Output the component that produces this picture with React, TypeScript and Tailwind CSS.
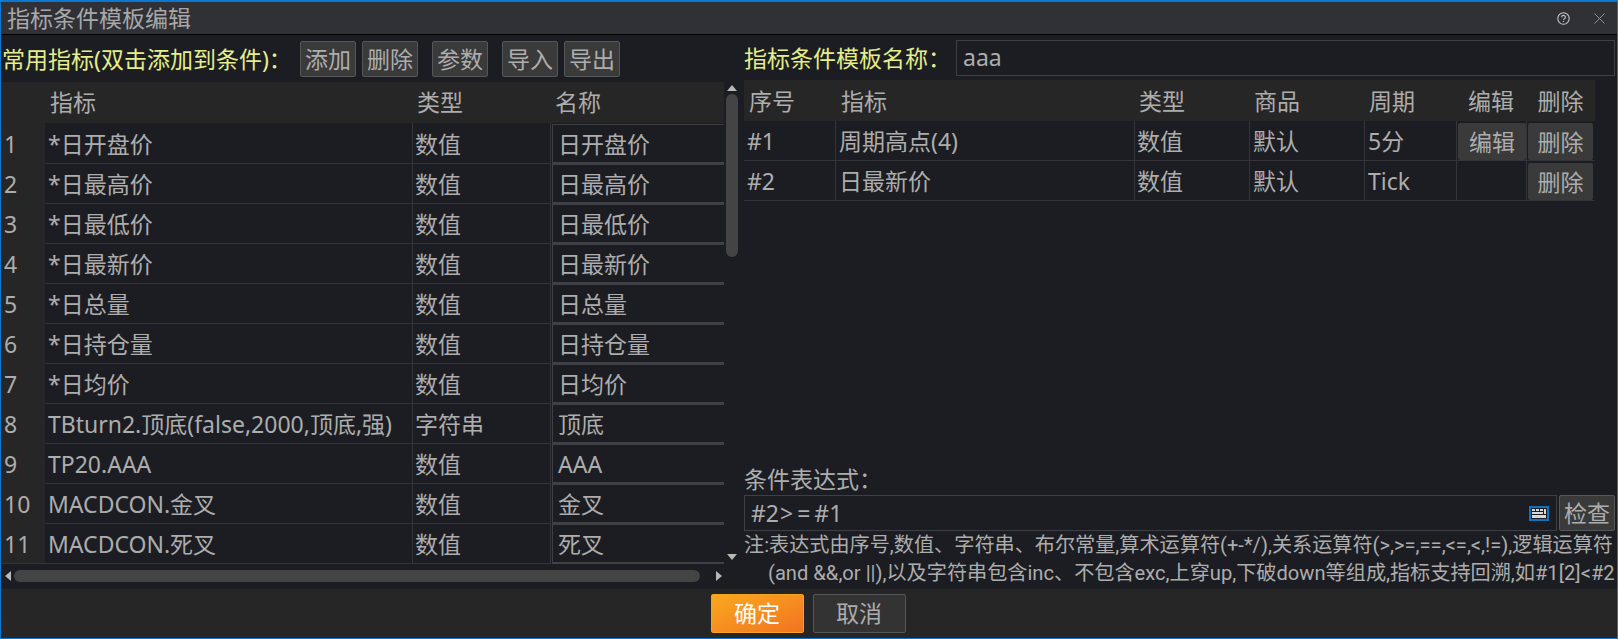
import React from "react";

const FONT = "[font-family:'Noto_Sans','Noto_Sans_CJK_SC',sans-serif]";

const leftRows = [
  { name: "*日开盘价", type: "数值", label: "日开盘价" },
  { name: "*日最高价", type: "数值", label: "日最高价" },
  { name: "*日最低价", type: "数值", label: "日最低价" },
  { name: "*日最新价", type: "数值", label: "日最新价" },
  { name: "*日总量", type: "数值", label: "日总量" },
  { name: "*日持仓量", type: "数值", label: "日持仓量" },
  { name: "*日均价", type: "数值", label: "日均价" },
  { name: "TBturn2.顶底(false,2000,顶底,强)", type: "字符串", label: "顶底" },
  { name: "TP20.AAA", type: "数值", label: "AAA" },
  { name: "MACDCON.金叉", type: "数值", label: "金叉" },
  { name: "MACDCON.死叉", type: "数值", label: "死叉" },
];

const rightRows = [
  { id: "#1", name: "周期高点(4)", type: "数值", item: "默认", period: "5分", editable: true },
  { id: "#2", name: "日最新价", type: "数值", item: "默认", period: "Tick", editable: false },
];

function ToolButton({ label, className = "" }: { label: string; className?: string }) {
  return (
    <button className={`h-9 w-14 shrink-0 rounded-[2px] border border-[#55565a] bg-[#3a3a3a] text-[#adadad] leading-none pt-0.5 ${className}`}>
      {label}
    </button>
  );
}

function RowButton({ label }: { label: string }) {
  return (
    <button className="h-[37px] mt-px w-full rounded-[2px] bg-[#3a3a3a] text-[#adadad] leading-none pt-0.5">
      {label}
    </button>
  );
}

function Arrow({ dir }: { dir: "up" | "down" | "left" | "right" }) {
  const points = {
    up: "0,6 5,0 10,6",
    down: "0,0 5,6 10,0",
    left: "6,0 0,5 6,10",
    right: "0,0 6,5 0,10",
  }[dir];
  const box = dir === "up" || dir === "down" ? "0 0 10 6" : "0 0 6 10";
  const size = dir === "up" || dir === "down" ? "w-2.5 h-1.5" : "w-1.5 h-2.5";
  return (
    <svg viewBox={box} className={size}>
      <polygon points={points} fill="#b8b8b8" />
    </svg>
  );
}

function KeyboardIcon() {
  return (
    <svg viewBox="0 0 20 15" className="w-5 h-[15px]">
      <rect x="0" y="0" width="20" height="15" fill="#1273b8" />
      <rect x="2" y="2" width="16" height="11" fill="#1c1d22" />
      <rect x="3" y="3" width="3" height="2" fill="#d8d8d8" />
      <rect x="7" y="3" width="3" height="2" fill="#d8d8d8" />
      <rect x="11" y="3" width="3" height="2" fill="#d8d8d8" />
      <rect x="15" y="3" width="2" height="5" fill="#d8d8d8" />
      <rect x="3" y="6" width="11" height="2" fill="#d8d8d8" />
      <rect x="3" y="9" width="14" height="3" fill="#d8d8d8" />
    </svg>
  );
}

export default function App() {
  return (
    <div className={`w-[1618px] h-[639px] flex flex-col overflow-hidden border border-t-2 border-[#0a78d2] bg-[#1c1d22] text-[23px] text-[#adadad] ${FONT}`}>
      {/* title bar */}
      <div className="h-[32px] shrink-0 flex items-center justify-between bg-[#303137] pl-1.5 pr-[12px]">
        <span className="text-[#a8a8a8] leading-none">指标条件模板编辑</span>
        <div className="flex items-center gap-[24px]">
          <svg viewBox="0 0 13 13" className="w-[13px] h-[13px]" fill="none" stroke="#c4c4c4">
            <circle cx="6.5" cy="6.5" r="5.7" strokeWidth="1.1" />
            <path d="M4.6 5.2c0-2.4 3.8-2.4 3.8 0 0 1.4-1.9 1.4-1.9 2.8M6.5 9v1" strokeWidth="1.1" />
          </svg>
          <svg viewBox="0 0 11 11" className="w-[11px] h-[11px]" fill="none" stroke="#9a9a9a" strokeWidth="0.9">
            <path d="M0.5 0.5L10.5 10.5M10.5 0.5L0.5 10.5" />
          </svg>
        </div>
      </div>
      <div className="h-px shrink-0 bg-black" />

      {/* body */}
      <div className="flex-1 min-h-0 flex">
        {/* left panel */}
        <div className="w-[737px] shrink-0 flex flex-col">
          <div className="h-[47px] shrink-0 flex items-center pl-px">
            <span className="w-[298px] shrink-0 text-[#e4ee8a] leading-none pt-0.5">常用指标(双击添加到条件)：</span>
            <ToolButton label="添加" />
            <ToolButton label="删除" className="ml-1.5" />
            <ToolButton label="参数" className="ml-3.5" />
            <ToolButton label="导入" className="ml-3.5" />
            <ToolButton label="导出" className="ml-1.5" />
          </div>
          <div className="flex">
            <div className="w-[723px] shrink-0">
              <div className="h-[41px] grid grid-cols-[44px_367px_138px_174px] items-center bg-[#262626]">
                <span />
                <span className="pl-[5px]">指标</span>
                <span className="pl-[5px]">类型</span>
                <span className="pl-[5px]">名称</span>
              </div>
              {leftRows.map((row, i) => (
                <div key={i} className="h-10 grid grid-cols-[44px_367px_138px_174px]">
                  <div className="flex items-center bg-[#262626] pl-[3px] pt-0.5 border-b border-[#33343a]">{i + 1}</div>
                  <div className="flex items-center pl-[3px] pt-0.5 whitespace-nowrap border-b border-[#33343a]">{row.name}</div>
                  <div className="flex items-center pl-0.5 pt-0.5 border-l border-b border-[#33343a]">{row.type}</div>
                  <div className="flex border-l border-[#33343a] pl-px pt-px">
                    <div className="flex-1 flex items-center pl-[5px] pt-0.5 border-l border-t border-[#3e3f44] border-b-2 border-b-[#404145]">
                      {row.label}
                    </div>
                  </div>
                </div>
              ))}
            </div>
            <div className="w-[14px] ml-px shrink-0 flex flex-col items-center">
              <div className="h-3 flex items-center"><Arrow dir="up" /></div>
              <div className="w-3 h-[163px] rounded-md bg-[#444444]" />
              <div className="flex-1" />
              <div className="h-3 flex items-center"><Arrow dir="down" /></div>
            </div>
          </div>
          <div className="h-[26px] shrink-0 flex items-center pl-[4px] pr-[16px]">
            <Arrow dir="left" />
            <div className="w-[686px] h-3 ml-[3px] rounded-md bg-[#444444]" />
            <div className="flex-1" />
            <Arrow dir="right" />
          </div>
        </div>

        {/* right panel */}
        <div className="flex-1 min-w-0 flex flex-col pl-[6px] pr-[2px]">
          <div className="h-[45px] shrink-0 flex items-center">
            <span className="w-[212px] shrink-0 text-[#e4ee8a] leading-none pt-0.5">指标条件模板名称：</span>
            <div className="h-9 flex-1 flex items-center pl-1.5 border border-[#3e3f44]">aaa</div>
          </div>
          <div className="w-[851px]">
            <div className="h-[41px] grid grid-cols-[91px_299px_115px_115px_92px_70px_69px] items-center bg-[#262626] pt-px">
              <span className="pl-[5px]">序号</span>
              <span className="pl-1.5">指标</span>
              <span className="pl-[5px]">类型</span>
              <span className="pl-[5px]">商品</span>
              <span className="pl-[5px]">周期</span>
              <span className="text-center">编辑</span>
              <span className="text-center">删除</span>
            </div>
            {rightRows.map((row) => (
              <div key={row.id} className="h-10 grid grid-cols-[91px_299px_115px_115px_92px_70px_69px] border-b border-[#33343a]">
                <div className="flex items-center pl-[3px] pt-0.5">{row.id}</div>
                <div className="flex items-center pl-[3px] pt-0.5 border-l border-[#33343a]">{row.name}</div>
                <div className="flex items-center pl-0.5 pt-0.5 border-l border-[#33343a]">{row.type}</div>
                <div className="flex items-center pl-[3px] pt-0.5 border-l border-[#33343a]">{row.item}</div>
                <div className="flex items-center pl-[3px] pt-0.5 border-l border-[#33343a]">{row.period}</div>
                <div className="flex items-center pl-px border-l border-[#33343a]">
                  {row.editable && <RowButton label="编辑" />}
                </div>
                <div className="flex items-center pl-px pr-0.5 border-l border-[#33343a]">
                  <RowButton label="删除" />
                </div>
              </div>
            ))}
          </div>
          <div className="flex-1" />
          <div className="leading-none h-[30px] flex items-center">条件表达式：</div>
          <div className="h-9 mt-[1px] shrink-0 flex gap-0.5">
            <div className="flex-1 flex items-center justify-between pl-1.5 pr-[7px] border border-[#3e3f44]">
              <span>#2<span className="tracking-[4px] pl-px">&gt;=</span>#1</span>
              <KeyboardIcon />
            </div>
            <button className="w-14 rounded-[2px] border border-[#55565a] bg-[#3a3a3a] leading-none">检查</button>
          </div>
          <div className="h-[58px] shrink-0 text-[20.15px] leading-[28px] whitespace-nowrap [font-family:'Roboto','Noto_Sans_CJK_SC',sans-serif]">
            <div>注:表达式由序号,数值、字符串、布尔常量,算术运算符(+-*/),关系运算符(&gt;,&gt;=,==,&lt;=,&lt;,!=),逻辑运算符</div>
            <div className="pl-6">(and &amp;&amp;,or ||),以及字符串包含inc、不包含exc,上穿up,下破down等组成,指标支持回溯,如#1[2]&lt;#2</div>
          </div>
        </div>
      </div>

      {/* footer */}
      <div className="h-[49px] shrink-0 flex items-center justify-center gap-[9px] bg-[#262626] pb-px pr-0.5">
        <button className="w-[93px] h-[39px] rounded-[2px] border border-[#f5a31c] bg-linear-to-br from-[#f9a91c] to-[#f27222] text-white leading-none">确定</button>
        <button className="w-[93px] h-[39px] rounded-[2px] border border-[#55565a] bg-[#333333] leading-none">取消</button>
      </div>
    </div>
  );
}
